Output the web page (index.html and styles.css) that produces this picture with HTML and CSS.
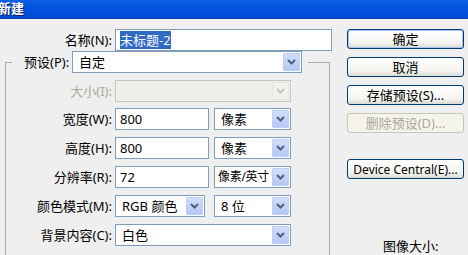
FILE: index.html
```html
<!DOCTYPE html>
<html lang="zh-CN">

<head>
  <meta charset="UTF-8">
  <meta name="viewport" content="width=device-width, initial-scale=1.0">
  <title>新建</title>
  <link rel="stylesheet" href="styles.css">
</head>

<body>
  <header class="titlebar">
    <span class="title">新建</span>
  </header>

  <div class="dialog">
    <div class="main">
      <div class="nameRow">
        <label class="label">名称(N):</label>
        <div class="field nameField"><span class="selected">未标题-2</span></div>
      </div>

      <fieldset class="group">
        <legend class="preset">
          <label class="presetLabel">预设(P):</label>
          <div class="combo presetCombo">
            <span class="value">自定</span>
            <span class="drop"><svg width="9" height="6" viewBox="0 0 9 6"><path d="M1 1l3.5 3.5L8 1" fill="none" stroke="#4d6185" stroke-width="2"/></svg></span>
          </div>
        </legend>

        <div class="row sizeRow">
          <label class="label disabled">大小(I):</label>
          <div class="combo wide off">
            <span class="value"></span>
            <span class="drop"><svg width="9" height="6" viewBox="0 0 9 6"><path d="M1 1l3.5 3.5L8 1" fill="none" stroke="#c9c7ba" stroke-width="2"/></svg></span>
          </div>
        </div>

        <div class="row">
          <label class="label">宽度(W):</label>
          <div class="field numField">800</div>
          <div class="combo unit">
            <span class="value">像素</span>
            <span class="drop"><svg width="9" height="6" viewBox="0 0 9 6"><path d="M1 1l3.5 3.5L8 1" fill="none" stroke="#4d6185" stroke-width="2"/></svg></span>
          </div>
        </div>

        <div class="row">
          <label class="label">高度(H):</label>
          <div class="field numField">800</div>
          <div class="combo unit">
            <span class="value">像素</span>
            <span class="drop"><svg width="9" height="6" viewBox="0 0 9 6"><path d="M1 1l3.5 3.5L8 1" fill="none" stroke="#4d6185" stroke-width="2"/></svg></span>
          </div>
        </div>

        <div class="row">
          <label class="label">分辨率(R):</label>
          <div class="field numField">72</div>
          <div class="combo unit">
            <span class="value tight">像素/英寸</span>
            <span class="drop"><svg width="9" height="6" viewBox="0 0 9 6"><path d="M1 1l3.5 3.5L8 1" fill="none" stroke="#4d6185" stroke-width="2"/></svg></span>
          </div>
        </div>

        <div class="row">
          <label class="label">颜色模式(M):</label>
          <div class="combo mode">
            <span class="value">RGB 颜色</span>
            <span class="drop"><svg width="9" height="6" viewBox="0 0 9 6"><path d="M1 1l3.5 3.5L8 1" fill="none" stroke="#4d6185" stroke-width="2"/></svg></span>
          </div>
          <div class="combo unit bits">
            <span class="value">8 位</span>
            <span class="drop"><svg width="9" height="6" viewBox="0 0 9 6"><path d="M1 1l3.5 3.5L8 1" fill="none" stroke="#4d6185" stroke-width="2"/></svg></span>
          </div>
        </div>

        <div class="row">
          <label class="label">背景内容(C):</label>
          <div class="combo wide">
            <span class="value">白色</span>
            <span class="drop"><svg width="9" height="6" viewBox="0 0 9 6"><path d="M1 1l3.5 3.5L8 1" fill="none" stroke="#4d6185" stroke-width="2"/></svg></span>
          </div>
        </div>
      </fieldset>
    </div>

    <div class="side">
      <button class="btn default">确定</button>
      <button class="btn">取消</button>
      <button class="btn store">存储预设(S)...</button>
      <button class="btn" disabled>删除预设(D)...</button>
      <button class="btn device">Device Central(E)...</button>
      <p class="imageSize">图像大小:</p>
    </div>
  </div>
</body>

</html>
```

FILE: styles.css
```css
body {
  margin: 0;
  width: 468px;
  height: 255px;
  overflow: hidden;
  background-color: #efefef;
  font-family: 'Noto Sans', 'Noto Sans CJK SC', sans-serif;
  font-size: 13px;
  color: #000;
}

.titlebar {
  height: 18px;
  background: linear-gradient(#0a5fe4, #0055e0 40%, #0049d4);
  border-bottom: 1px solid #0841b8;
}

.title {
  display: block;
  margin-left: -2px;
  color: white;
  font-weight: bold;
  font-size: 13px;
  line-height: 17px;
  text-shadow: 1px 1px 0 #0a246a;
}

.dialog {
  display: flex;
  padding-top: 10px;
}

.main {
  width: 332px;
}

.label {
  width: 112px;
  text-align: right;
  flex-shrink: 0;
  line-height: 22px;
  margin-right: 3px;
}

.label.disabled {
  color: #aca899;
}

.nameRow {
  display: flex;
  height: 22px;
}

.field {
  box-sizing: border-box;
  height: 22px;
  border: 1px solid #7f9db9;
  background: white;
  line-height: 20px;
  padding-left: 4px;
}

.nameField {
  width: 217px;
}

.selected {
  background: #316ac5;
  color: white;
}

/* preset group box */
.group {
  margin: 0 2px 0 5px;
  padding: 0 0 30px 0;
  border: 1px solid #a9a9a9;
}

.preset {
  display: flex;
  margin-left: 6px;
  padding: 0 6px 0 12px;
}

.presetLabel {
  width: 48px;
  line-height: 22px;
}

.presetCombo {
  width: 230px;
}

.row {
  display: flex;
  margin-top: 7px;
}

.row .label {
  width: 106px;
}

.sizeRow {
  margin-top: 7px;
  margin-bottom: -1px;
}

.combo {
  box-sizing: border-box;
  display: flex;
  height: 22px;
  border: 1px solid #7f9db9;
  background: white;
}

.combo .value {
  flex: 1;
  padding-left: 6px;
  line-height: 20px;
  white-space: nowrap;
  overflow: hidden;
}

.combo .value.tight {
  padding-left: 3px;
  font-size: 12px;
  letter-spacing: -0.3px;
}

.combo .drop {
  box-sizing: border-box;
  display: flex;
  align-items: center;
  justify-content: center;
  width: 17px;
  margin: 1px;
  border: 1px solid #bccff8;
  background: linear-gradient(#d2def9, #b5c8f5);
  border-radius: 1px;
}

.combo.off {
  border-color: #c9c7ba;
  background: #f0efe9;
}

.combo.off .drop {
  border-color: #e6e5de;
  background: #f2f1ec;
}

.wide {
  width: 176px;
}

.numField {
  width: 94px;
  margin-right: 5px;
}

.unit {
  width: 77px;
}

.mode {
  width: 90px;
}

.bits {
  margin-left: 9px;
}

/* buttons on the right */
.side {
  display: flex;
  flex-direction: column;
  margin-left: 15px;
  width: 117px;
}

.btn {
  box-sizing: border-box;
  height: 20px;
  margin-top: 8px;
  padding: 0;
  border: 1px solid #003c74;
  border-radius: 3px;
  background: linear-gradient(#ffffff, #f4f4f0 70%, #dcdad2);
  font-family: 'Noto Sans', 'Noto Sans CJK SC', sans-serif;
  font-size: 13px;
  line-height: 17px;
  color: #000;
}

.btn.default {
  margin-top: 0;
  box-shadow: inset 0 0 0 1px #a9c4f3;
}

.btn:disabled {
  border-color: #c9c7ba;
  background: #f5f4ea;
  color: #aca899;
}

.btn.device {
  margin-top: 26px;
  font-size: 12px;
}

.imageSize {
  margin: 59px 0 0 36px;
  line-height: 16px;
}
```
